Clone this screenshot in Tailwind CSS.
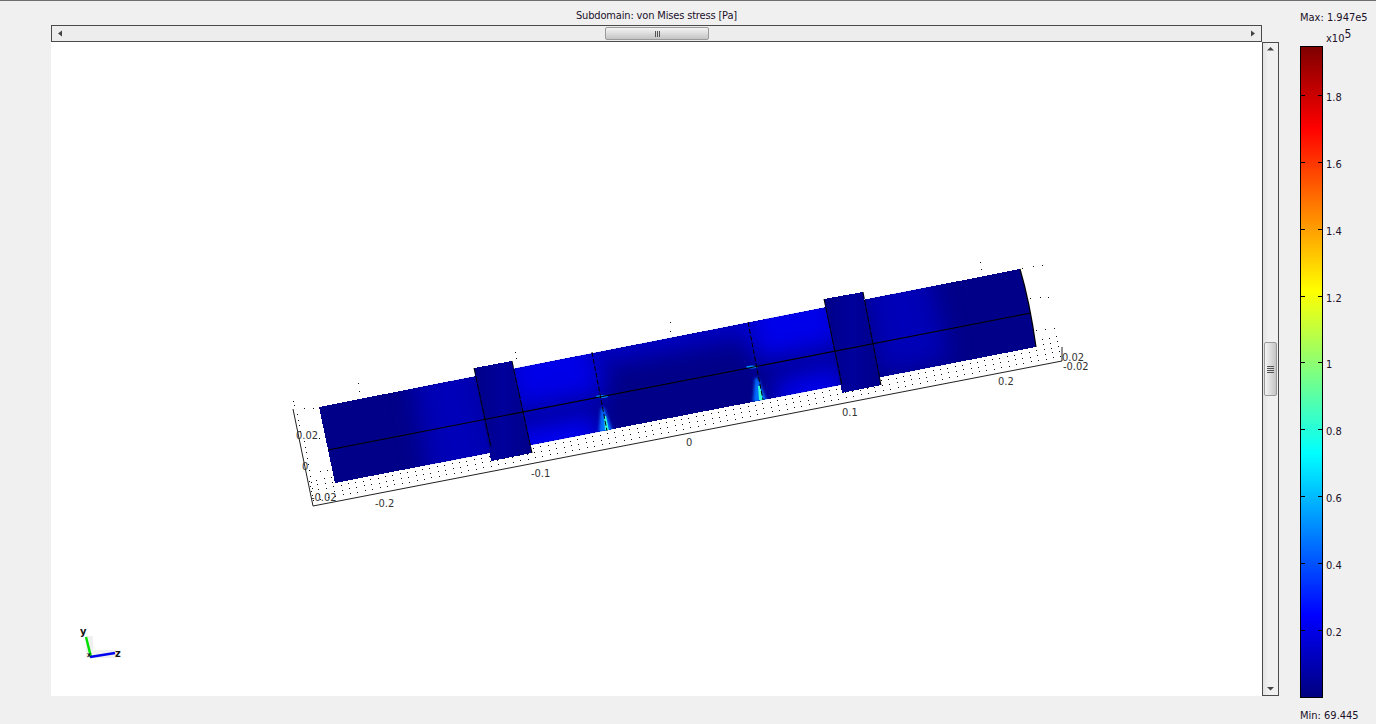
<!DOCTYPE html>
<html lang="en">
<head>
    <meta charset="UTF-8">
    <title>Subdomain: von Mises stress</title>
    <script src="https://cdn.jsdelivr.net/npm/@tailwindcss/browser@4"></script>
</head>
<body class="bg-[#f0f0f0]">
    <div class="w-[1376px] h-[724px] overflow-hidden flex border-t border-[#6f6f6f] font-['DejaVu_Sans_Condensed','Noto_Sans',sans-serif] text-[11px] text-[#20102a]">

        <!-- plot column -->
        <div class="ml-[51px] w-[1211px] flex flex-col">
            <div class="h-[24px] flex items-center justify-center pt-[4px] leading-none tracking-[-0.16px]">Subdomain: von Mises stress [Pa]</div>
            <div class="h-[17px] border border-[#4a4a4a] bg-[#ededed] flex items-center justify-between relative">
                <svg width="16" height="15" viewBox="0 0 16 15"><path d="M6 7.5 10 4.5V10.5Z" fill="#444"/></svg>
                <div class="absolute left-[553px] top-[1px] w-[104px] h-[13px] rounded-[2px] border border-[#9a9a9a] bg-[linear-gradient(to_bottom,#f4f4f4,#dcdcdc_50%,#c4c4c4)] flex items-center justify-center gap-[1px]">
                    <span class="w-[1px] h-[6px] bg-[#555]"></span>
                    <span class="w-[1px] h-[6px] bg-[#555]"></span>
                    <span class="w-[1px] h-[6px] bg-[#555]"></span>
                </div>
                <svg width="16" height="15" viewBox="0 0 16 15"><path d="M10 7.5 6 4.5V10.5Z" fill="#444"/></svg>
            </div>
            <div class="w-[1211px] h-[654px] bg-white">
                <svg id="plot" width="1211" height="654" viewBox="51 42 1211 654" class="block">
                    <defs>
                        <clipPath id="shaft"><path d="M319 407 1020 269Q1030 303 1036 347L335 483Z"/></clipPath>
                        <filter id="b12" x="-60%" y="-100%" width="220%" height="300%"><feGaussianBlur stdDeviation="12"/></filter>
                        <filter id="b2" x="-200%" y="-100%" width="500%" height="300%"><feGaussianBlur stdDeviation="1.600"/></filter>
                        <filter id="b1" x="-200%" y="-100%" width="500%" height="300%"><feGaussianBlur stdDeviation=".7"/></filter>
                        <linearGradient id="collar" gradientUnits="objectBoundingBox" x1="0" y1="0" x2="1" y2="0">
                            <stop offset="0" stop-color="#000088"/>
                            <stop offset=".5" stop-color="#00009c"/>
                            <stop offset="1" stop-color="#000088"/>
                        </linearGradient>
                    </defs>

                    <path id="dots" d="" stroke="#111" stroke-width="1" fill="none" shape-rendering="crispEdges"/>

                    <path d="M319 407 1020 269Q1030 303 1036 347L335 483Z" fill="#000088" shape-rendering="crispEdges"/>
                    <g clip-path="url(#shaft)">
                        <!-- stress shading -->
                        <polygon points="410,360 474,350 505,475 430,490" fill="#0000c8" opacity=".75" filter="url(#b12)"/>
                        <polygon points="500,340 592,325 606,395 512,412" fill="#0000f0" opacity=".92" filter="url(#b12)"/>
                        <polygon points="505,430 596,412 606,460 515,478" fill="#0000f0" filter="url(#b12)"/>
                        <polygon points="590,325 755,295 760,335 600,365" fill="#0000d0" opacity=".85" filter="url(#b12)"/>
                        <polygon points="745,300 830,280 846,345 755,362" fill="#0000f0" opacity=".95" filter="url(#b12)"/>
                        <polygon points="772,380 840,362 852,408 782,424" fill="#0000e8" filter="url(#b12)"/>
                        <polygon points="860,265 925,255 950,360 880,375" fill="#0000c8" opacity=".75" filter="url(#b12)"/>
                        <!-- stress peaks at the shoulders -->
                        <polygon points="601,408 604,408 613,432 599,432" fill="#0070ff" filter="url(#b2)"/>
                        <polygon points="604,416 606,416 609,431 605,431" fill="#30ffd8" filter="url(#b1)"/>
                        <polygon points="755,378 758,378 767,402 753,402" fill="#0070ff" filter="url(#b2)"/>
                        <polygon points="758,386 760,386 763,400 759,400" fill="#30ffd8" filter="url(#b1)"/>
                        <ellipse cx="602" cy="396.500" rx="6" ry="1.500" fill="#0090ff" filter="url(#b1)"/>
                        <ellipse cx="752" cy="367" rx="6" ry="1.500" fill="#0090ff" filter="url(#b1)"/>
                    </g>

                    <!-- collars -->
                    <polygon points="474,368 512,361 532,453 491,461" fill="url(#collar)" shape-rendering="crispEdges"/>
                    <polygon points="824,299 863,292 881,385 842,393" fill="url(#collar)" shape-rendering="crispEdges"/>

                    <!-- section lines -->
                    <g stroke="#000" fill="none">
                        <path d="M474 368 491 447M512 361 532 453" stroke-dasharray="7 1"/>
                        <path d="M824 299 842 385M863 292 881 385" stroke-dasharray="7 1"/>
                        <path d="M592 352 607 431M748 322 763 400" stroke-dasharray="5 2"/>
                        <path d="M1020 269Q1030 303 1036 347" stroke-width="1.200"/>
                        <path d="M328 450 1031 313" stroke-width="1.100"/>
                        <!-- axis frame -->
                        <path d="M293 409 313 506 1062 361V347" stroke="#222"/>
                    </g>

                    <!-- axis labels -->
                    <g font-family="'DejaVu Sans Condensed','Noto Sans',sans-serif" font-size="11" fill="#333">
                        <text x="375" y="507">-0.2</text>
                        <text x="531" y="477">-0.1</text>
                        <text x="686" y="446">0</text>
                        <text x="842" y="416">0.1</text>
                        <text x="998" y="385">0.2</text>
                        <text x="296" y="439">0.02</text>
                        <text x="302" y="470">0</text>
                        <text x="311" y="501">-0.02</text>
                        <text x="1062" y="361">0.02</text>
                        <text x="1063" y="370">-0.02</text>
                    </g>

                    <!-- view axes -->
                    <rect x="86" y="636" width="7" height="22" fill="#f0f0f0"/>
                    <rect x="86" y="650" width="30" height="8" fill="#f0f0f0"/>
                    <path d="M86 637 91 657" stroke="#00e000" stroke-width="2.400"/>
                    <path d="M90 657 115 653" stroke="#0000f0" stroke-width="2.600"/>
                    <g font-family="'DejaVu Sans Condensed','Noto Sans',sans-serif" font-size="11" font-weight="600" fill="#111">
                        <text x="80" y="635">y</text>
                        <text x="115" y="657">z</text>
                        <text x="87" y="657" font-size="7">x</text>
                    </g>
                </svg>
            </div>
        </div>

        <!-- vertical scrollbar -->
        <div class="mt-[41px] w-[17px] h-[654px] border border-[#4a4a4a] bg-[linear-gradient(to_right,#e2e2e2,#f0f0f0_35%)] flex flex-col items-center justify-between relative">
            <svg width="15" height="16" viewBox="0 0 15 16"><path d="M7.5 4 11 7.5H4Z" fill="#444"/></svg>
            <div class="absolute left-[1px] top-[299px] w-[13px] h-[54px] rounded-[2px] border border-[#9a9a9a] bg-[linear-gradient(to_right,#f4f4f4,#dcdcdc_50%,#c4c4c4)] flex flex-col items-center justify-center gap-[1px]">
                <span class="w-[7px] h-[1px] bg-[#555]"></span>
                <span class="w-[7px] h-[1px] bg-[#555]"></span>
                <span class="w-[7px] h-[1px] bg-[#555]"></span>
                <span class="w-[7px] h-[1px] bg-[#555]"></span>
            </div>
            <svg width="15" height="16" viewBox="0 0 15 16"><path d="M7.5 11.5 11 8H4Z" fill="#444"/></svg>
        </div>

        <!-- colour scale -->
        <div class="ml-[21px] flex-1 flex flex-col">
            <div class="h-[16px] pt-[11px] leading-none whitespace-nowrap">Max: 1.947e5</div>
            <div class="h-[29px] pl-[26px] pt-[16px] leading-none flex items-start">x10<span class="text-[12px] leading-none -mt-[5px]">5</span></div>
            <div class="flex">
                <div class="w-[23px] h-[652px] border border-black bg-[linear-gradient(to_bottom,#7f0000,#ff0000_12.5%,#ffff00_37.5%,#00ffff_62.5%,#0000ff_87.5%,#00007f)] flex flex-col justify-end pb-[66px] gap-[65.9px]">
                    <div class="flex justify-between"><i class="w-[4px] h-[1px] bg-black"></i><i class="w-[4px] h-[1px] bg-black"></i></div>
                    <div class="flex justify-between"><i class="w-[4px] h-[1px] bg-black"></i><i class="w-[4px] h-[1px] bg-black"></i></div>
                    <div class="flex justify-between"><i class="w-[4px] h-[1px] bg-black"></i><i class="w-[4px] h-[1px] bg-black"></i></div>
                    <div class="flex justify-between"><i class="w-[4px] h-[1px] bg-black"></i><i class="w-[4px] h-[1px] bg-black"></i></div>
                    <div class="flex justify-between"><i class="w-[4px] h-[1px] bg-black"></i><i class="w-[4px] h-[1px] bg-black"></i></div>
                    <div class="flex justify-between"><i class="w-[4px] h-[1px] bg-black"></i><i class="w-[4px] h-[1px] bg-black"></i></div>
                    <div class="flex justify-between"><i class="w-[4px] h-[1px] bg-black"></i><i class="w-[4px] h-[1px] bg-black"></i></div>
                    <div class="flex justify-between"><i class="w-[4px] h-[1px] bg-black"></i><i class="w-[4px] h-[1px] bg-black"></i></div>
                    <div class="flex justify-between"><i class="w-[4px] h-[1px] bg-black"></i><i class="w-[4px] h-[1px] bg-black"></i></div>
                </div>
                <div class="ml-[3px] h-[652px] flex flex-col justify-end pb-[58px] gap-[51.9px] leading-[15px]">
                    <span class="h-[15px]">1.8</span>
                    <span class="h-[15px]">1.6</span>
                    <span class="h-[15px]">1.4</span>
                    <span class="h-[15px]">1.2</span>
                    <span class="h-[15px]">1</span>
                    <span class="h-[15px]">0.8</span>
                    <span class="h-[15px]">0.6</span>
                    <span class="h-[15px]">0.4</span>
                    <span class="h-[15px]">0.2</span>
                </div>
            </div>
            <div class="pt-[12px] leading-none whitespace-nowrap">Min: 69.445</div>
        </div>
    </div>

    <script>
        // point grid of the axis planes, drawn as single pixels
        let d = '';
        function dot(x, y) {
            d += 'M' + Math.round(x) + ' ' + (Math.round(y) + 0.5) + 'h1';
        }
        for (let i = 0; i < 102; i++) {
            for (let j = 1; j < 6; j++) {
                dot(314 + i * 7.4 - j * 1, 505 - i * 1.431 - j * 4.8);
            }
        }
        const extra = [[293,401],[294,405],[304,408],[313,408],[297,414],[298,420],[299,425],[300,431],[304,441],[305,447],[306,452],[319,438],
            [307,458],[308,464],[309,470],[310,476],[311,482],[312,488],[320,471],[327,470],
            [358,383],[359,391],[515,352],[516,358],[670,322],[670,331],
            [980,262],[981,269],[1022,268],[1033,266],[1042,265],[1030,298],[1040,297],[1048,297],[1036,330],[1045,329],[1054,328]];
        extra.forEach(p => dot(p[0], p[1]));
        document.getElementById('dots').setAttribute('d', d);
    </script>
</body>
</html>
